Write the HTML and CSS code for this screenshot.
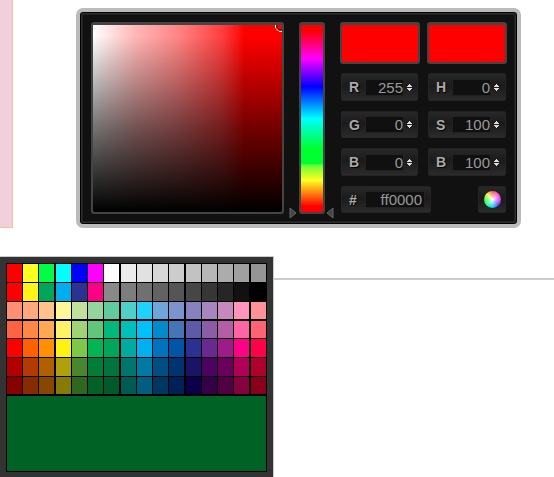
FILE: index.html
```html
<!DOCTYPE html>
<html lang="en">
<head>
<meta charset="utf-8">
<title>Color picker</title>
<link rel="stylesheet" href="styles.css">
</head>
<body>
<main class="top">
  <aside class="side"></aside>
  <form class="picker">
    <div class="map"><svg class="cursor" width="7" height="7" viewBox="0 0 7 7"><path d="M2 0v2q1 3 5 3" fill="none" stroke="#222"/><path d="M.5 0v3M1 3.500l2.500 2.500M4 6.500h3" fill="none" stroke="#fff"/></svg></div>
    <div class="hue-wrap">
      <svg class="arrow" width="8" height="12" viewBox="0 0 8 12"><path d="M1 1L7 6L1 11Z" fill="#444" stroke="#666"/></svg>
      <div class="hue"></div>
      <svg class="arrow" width="8" height="12" viewBox="0 0 8 12"><path d="M7 1L1 6L7 11Z" fill="#444" stroke="#666"/></svg>
    </div>
    <div class="controls">
      <div class="preview"></div>
      <div class="preview"></div>
      <div class="fields">
        <label class="field"><span class="name">R</span><input value="255"><svg class="spin" width="5" height="9" viewBox="0 0 5 9"><path d="M0 3h1V2h1V1h1v1h1v1h1v1H0ZM0 5h5v1H4v1H3v1H2V7H1V6H0Z"/></svg></label>
        <label class="field"><span class="name">H</span><input value="0"><svg class="spin" width="5" height="9" viewBox="0 0 5 9"><path d="M0 3h1V2h1V1h1v1h1v1h1v1H0ZM0 5h5v1H4v1H3v1H2V7H1V6H0Z"/></svg></label>
        <label class="field"><span class="name">G</span><input value="0"><svg class="spin" width="5" height="9" viewBox="0 0 5 9"><path d="M0 3h1V2h1V1h1v1h1v1h1v1H0ZM0 5h5v1H4v1H3v1H2V7H1V6H0Z"/></svg></label>
        <label class="field"><span class="name">S</span><input value="100"><svg class="spin" width="5" height="9" viewBox="0 0 5 9"><path d="M0 3h1V2h1V1h1v1h1v1h1v1H0ZM0 5h5v1H4v1H3v1H2V7H1V6H0Z"/></svg></label>
        <label class="field"><span class="name">B</span><input value="0"><svg class="spin" width="5" height="9" viewBox="0 0 5 9"><path d="M0 3h1V2h1V1h1v1h1v1h1v1H0ZM0 5h5v1H4v1H3v1H2V7H1V6H0Z"/></svg></label>
        <label class="field"><span class="name">B</span><input value="100"><svg class="spin" width="5" height="9" viewBox="0 0 5 9"><path d="M0 3h1V2h1V1h1v1h1v1h1v1H0ZM0 5h5v1H4v1H3v1H2V7H1V6H0Z"/></svg></label>
        <div class="last">
          <label class="field hex"><span class="name">#</span><input value="ff0000"></label>
          <button class="field wheel" type="button" aria-label="Color wheel"><span class="disc"></span></button>
        </div>
      </div>
    </div>
  </form>
</main>
<section class="bottom">
  <div class="palette">
    <div class="swatches">
      <div class="grid" id="grid"></div>
      <div class="chosen"></div>
    </div>
  </div>
  <hr>
</section>
<script src="palette.js"></script>
</body>
</html>
```
FILE: palette.js
```js
const rows = [
  'ff0000 ffff22 00ff44 00ffff 0000ff ff00ff ffffff ebebeb e1e1e1 d7d7d7 cccccc c2c2c2 b7b7b7 acacac a0a0a0 959595',
  'ff0000 fff217 00a75a 00adef 2c3192 ff0084 898989 7d7d7d 707070 626262 555555 464646 363636 262626 111111 000000',
  'ff8f73 ffa77d ffc288 fff698 c0e09b 93d59d 62cb9d 50cfca 1fd2fb 6ca6db 7b94cd 8781bd a985bf c789bb ff94bd ff9298',
  'ff6340 ff8748 ffaa51 fff266 a0d375 60c778 00b97d 00c0b9 00c2f8 008bcb 4575b7 5d5ba7 8b5da7 b45fa5 ff64a4 ff6375',
  'ff0000 ff6000 ff9100 fff212 7dc846 00b652 00a75b 00aba0 00b0f0 0073be 0055a6 2b3092 6b2891 9e1b8a ff0086 ff004b',
  'b00000 b33a00 b06000 b0a10c 49872e 007d36 00743e 00766f 0079a5 004e82 003471 1b1464 4a035e 6b005c b00057 b0002e',
  '880000 892b00 874700 857b05 30671f 006225 005a2a 005b52 005e80 003760 002157 0c004a 340046 520044 87003f 88001b'
];
const grid = document.getElementById('grid');
rows.join(' ').split(' ').forEach(hex => {
  const b = document.createElement('button');
  b.className = 'swatch';
  b.style.backgroundColor = '#' + hex;
  b.setAttribute('aria-label', '#' + hex);
  grid.append(b);
});
```
FILE: styles.css
```css
* { box-sizing: border-box; }
body { margin: 0; background: #fff; font-family: "Liberation Sans", Arial, sans-serif; }
.top { display: flex; align-items: flex-start; gap: 63px; }
.side { width: 13px; align-self: stretch; background: #f0d0dc; border: solid #fdbf8d; border-width: 0 1px 1px 0; }
.picker {
  display: flex;
  margin-top: 8px;
  padding: 10px 10px 10px 11px;
  border: 4px solid #bbb;
  border-radius: 7px;
  background: #111;
  box-shadow: inset 0 0 0 1px #000, inset 0 0 0 2px #2e3030, inset 0 0 0 3px #1e1f1f;
}
.map, .hue, .preview { border: 2px solid #444; border-top-width: 3px; border-radius: 3px; }
.map {
  position: relative;
  width: 193px;
  height: 192px;
  background:
    linear-gradient(to top, #000, rgba(0, 0, 0, .55) 45%, rgba(0, 0, 0, 0) 94%) padding-box,
    linear-gradient(to right, #fff, #ffb8b8 22%, #ff8484 45%, #ff4040 68%, #ff1818 76%, #f00 80%) padding-box;
}
.cursor { position: absolute; top: 0; right: 0; }
.hue-wrap { display: flex; align-items: flex-end; margin-left: 5px; height: 192px; }
.arrow { margin-bottom: -5px; }
.hue {
  width: 26px;
  height: 192px;
  margin: 0 1px 0 2px;
  background: linear-gradient(#f00 3%, #f0f 18%, #00f 33%, #0ff 50%, #00ff30 66%, #00ff30 74%, #66ff38 75%, #ff2 83%, #f00 97%) padding-box;
}
.controls { display: grid; grid-template-columns: 80px 80px; gap: 9px 7px; margin-left: 6px; align-content: start; }
.preview { height: 42px; background: #f00; }
.fields { grid-column: 1 / -1; display: grid; grid-template-columns: 77px 78px; grid-template-rows: 28px 27px 28px 27px; gap: 10px; padding-left: 1px; }
.field {
  display: flex;
  align-items: center;
  padding: 0 5px 0 7px;
  border: 1px solid #242424;
  border-radius: 2px;
  background: linear-gradient(#282828, #1b1b1b 45%, #2b2b2b);
}
.name { width: 16px; color: #aaa; font-size: 14px; font-weight: bold; text-shadow: 1px 1px 1px #000; }
.field input {
  width: 39px;
  height: 17px;
  padding: 0;
  border: 1px solid #222;
  background: #101010;
  color: #999;
  font: 15px/15px "Liberation Sans", Arial, sans-serif;
  text-align: right;
}
.spin { margin-left: 3px; fill: #ddd; }
.last { grid-column: 1 / -1; display: flex; justify-content: space-between; }
.hex input { width: 60px; padding-right: 2px; }
.wheel { width: 28px; padding: 0; justify-content: center; }
.disc {
  width: 17px;
  height: 17px;
  border-radius: 50%;
  background: radial-gradient(#fff, transparent 70%), conic-gradient(#f44, #f6e, #f0f, #44f, #0cf, #0f8, #3f3, #df2, #f44);
  background: radial-gradient(#fff, transparent 70%), conic-gradient(#f55, #f4c, #c3f, #44f, #0cf, #0f8, #3f3, #df2, #f55);
}
.bottom { display: flex; align-items: flex-start; margin-top: 28px; }
.palette { padding: 6px; border: solid #ccc; border-width: 1px 1px 0 0; background: #333; }
.swatches { padding: 1px; background: #000; }
.grid { display: grid; grid-template-columns: repeat(4, 15px 15px 15px 16px); grid-template-rows: 18px 18px 17px 18px 18px 18px 17px; gap: 1px; }
.swatch { padding: 0; border: 0 solid #000; border-radius: 0; }
.swatch:nth-child(4n) { border-left-width: 1px; }
.swatch:nth-child(n + 49):nth-child(-n + 64) { border-top-width: 1px; }
.chosen { height: 75px; margin-top: 2px; background: #006225; }
hr { flex: 1; height: 2px; margin: 22px 0 0; border: 0; background: #ccc; }
```
